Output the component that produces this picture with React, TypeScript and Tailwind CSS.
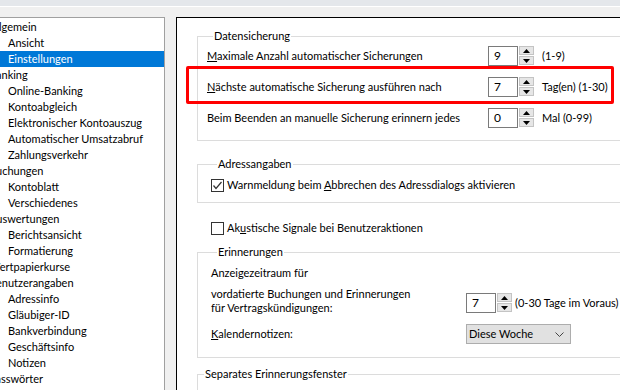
import React from "react"

const tree: { label: string; level: number; selected?: boolean }[] = [
  { label: "Allgemein", level: 0 },
  { label: "Ansicht", level: 1 },
  { label: "Einstellungen", level: 1, selected: true },
  { label: "Banking", level: 0 },
  { label: "Online-Banking", level: 1 },
  { label: "Kontoabgleich", level: 1 },
  { label: "Elektronischer Kontoauszug", level: 1 },
  { label: "Automatischer Umsatzabruf", level: 1 },
  { label: "Zahlungsverkehr", level: 1 },
  { label: "Buchungen", level: 0 },
  { label: "Kontoblatt", level: 1 },
  { label: "Verschiedenes", level: 1 },
  { label: "Auswertungen", level: 0 },
  { label: "Berichtsansicht", level: 1 },
  { label: "Formatierung", level: 1 },
  { label: "Wertpapierkurse", level: 0 },
  { label: "Benutzerangaben", level: 0 },
  { label: "Adressinfo", level: 1 },
  { label: "Gläubiger-ID", level: 1 },
  { label: "Bankverbindung", level: 1 },
  { label: "Geschäftsinfo", level: 1 },
  { label: "Notizen", level: 1 },
  { label: "Passwörter", level: 0 },
]

function SpinBox({ value }: { value: string }) {
  return (
    <div className="flex items-start gap-px">
      <div className="w-[30px] h-[20px] border border-[#7a7a7a] bg-white flex items-center pl-[5px] text-[12px]">{value}</div>
      <div className="w-[15px] h-[19px] flex flex-col gap-px">
        <div className="flex-1 bg-[#e6e6e6] border border-[#c4c4c4] flex items-center justify-center">
          <svg width="7" height="4" viewBox="0 0 7 4"><path d="M0 4 L3.5 0 L7 4 Z" fill="#000" /></svg>
        </div>
        <div className="flex-1 bg-[#e6e6e6] border border-[#c4c4c4] flex items-center justify-center">
          <svg width="7" height="4" viewBox="0 0 7 4"><path d="M0 0 L3.5 4 L7 0 Z" fill="#000" /></svg>
        </div>
      </div>
    </div>
  )
}

function CheckBox({ checked }: { checked?: boolean }) {
  return (
    <div className="w-[13px] h-[13px] border border-[#333] bg-white flex items-center justify-center shrink-0">
      {checked && (
        <svg width="11" height="11" viewBox="0 0 11 11">
          <path d="M1.5 5.5 L4 8.5 L9.5 2" stroke="#333" strokeWidth="1.2" fill="none" />
        </svg>
      )}
    </div>
  )
}

export default function App() {
  return (
    <div className="relative w-[620px] h-[390px] overflow-hidden bg-[#f0f0f0] flex flex-col text-[11px] text-black whitespace-nowrap font-['Lato','Liberation_Sans',sans-serif]">
      <div className="h-[6px] bg-[#e4e7eb] shrink-0" />
      <div className="h-px bg-white shrink-0" />
      <div className="flex flex-1 pt-[10px] gap-[11px] min-h-0">
        {/* tree */}
        <div className="w-[165px] shrink-0 bg-white border-t border-r border-[#a0a0a0] overflow-hidden pt-px">
          {tree.map((t) => (
            <div
              key={t.label}
              className={
                "h-[16px] flex items-center " +
                (t.selected ? "bg-[#0078d7] text-white" : "")
              }
            >
              <span className={t.level === 0 ? "-ml-[11px]" : "ml-[8px]"}>{t.label}</span>
            </div>
          ))}
        </div>

        {/* settings page */}
        <div className="flex-1 bg-white border-t border-l border-black pl-[20px] min-w-0">
          <fieldset className="w-[460px] mt-[10px] border border-[#dcdcdc] pl-[9px] pb-[12px]">
            <legend className="ml-[6px] px-px h-[16px] leading-[16px]">Datensicherung</legend>
            <div className="flex flex-col gap-[11px] pt-[2px]">
              <div className="h-[20px] flex items-center">
                <span className="w-[281px]"><u>M</u>aximale Anzahl automatischer Sicherungen</span>
                <SpinBox value="9" />
                <span className="ml-[8px]">(1-9)</span>
              </div>
              <div className="h-[20px] flex items-center">
                <span className="w-[281px]"><u>N</u>ächste automatische Sicherung ausführen nach</span>
                <SpinBox value="7" />
                <span className="ml-[8px]">Tag(en) (1-30)</span>
              </div>
              <div className="h-[20px] flex items-center">
                <span className="w-[281px]">Beim Beenden an manuelle Sicherung erinnern jedes</span>
                <SpinBox value="0" />
                <span className="ml-[8px]">Mal (0-99)</span>
              </div>
            </div>
          </fieldset>

          <fieldset className="w-[460px] mt-[15px] border border-[#dcdcdc] pl-[13px] pb-[9px]">
            <legend className="ml-[6px] px-px h-[16px] leading-[16px]">Adressangaben</legend>
            <div className="h-[16px] mt-[5px] flex items-center gap-[3px]">
              <CheckBox checked />
              <span>Warnmeldung beim <u>A</u>bbrechen des Adressdialogs aktivieren</span>
            </div>
          </fieldset>

          <div className="h-[16px] mt-[17px] ml-[14px] flex items-center gap-[3px]">
            <CheckBox />
            <span>Ak<u>u</u>stische Signale bei Benutzeraktionen</span>
          </div>

          <fieldset className="w-[460px] mt-[8px] border border-[#dcdcdc] pl-[13px] pb-[13px]">
            <legend className="ml-[6px] px-px h-[16px] leading-[16px]">Erinnerungen</legend>
            <div className="h-[16px] mt-[5px] flex items-center">Anzeigezeitraum für</div>
            <div className="mt-[6px] grid grid-cols-[255px_auto] gap-y-[9px] items-center">
              <div className="leading-[14px]">
                vordatierte Buchungen und Erinnerungen
                <br />
                für Vertragskündigungen:
              </div>
              <div className="flex items-center gap-[3px] pt-[4px]">
                <SpinBox value="7" />
                <span>(0-30 Tage im Voraus)</span>
              </div>
              <div><u>K</u>alendernotizen:</div>
              <div className="w-[105px] h-[20px] bg-[#e1e1e1] border border-[#adadad] flex items-center justify-between pl-[2px] pr-[6px]">
                <span>Diese Woche</span>
                <svg width="9" height="5" viewBox="0 0 9 5"><path d="M0.5 0.5 L4.5 4.5 L8.5 0.5" stroke="#444" fill="none" /></svg>
              </div>
            </div>
          </fieldset>

          <fieldset className="w-[460px] mt-[8px] border border-[#dcdcdc] h-[40px]">
            <legend className="ml-[6px] px-px h-[16px] leading-[16px]">Separates Erinnerungsfenster</legend>
          </fieldset>
        </div>
      </div>

      {/* red highlight annotation */}
      <div className="absolute left-[186px] top-[66px] w-[428px] h-[38px] border-[3px] border-[#ff0000] rounded-[2px]" />
    </div>
  )
}
